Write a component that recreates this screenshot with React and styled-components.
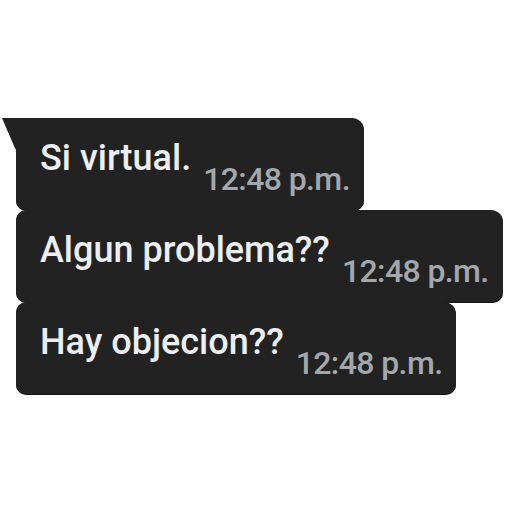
import React from "react";
import styled, { createGlobalStyle } from "styled-components";

const GlobalStyle = createGlobalStyle`
  body {
    margin: 0;
    background: #ffffff;
    font-family: Roboto, "Liberation Sans", sans-serif;
  }
`;

const Page = styled.div`
  width: 512px;
  height: 512px;
  box-sizing: border-box;
  padding: 118px 0 0 16px;
  display: flex;
  flex-direction: column;
  align-items: flex-start;
`;

const Bubble = styled.div`
  position: relative;
  display: flex;
  align-items: flex-start;
  box-sizing: border-box;
  height: 92px;
  padding: 19px 14px 13px 24px;
  background: #222222;
  border-radius: ${({ first }) => (first ? "0 12px 10px 10px" : "10px 12px 10px 10px")};
  box-shadow: 0 1px 0 #141414;

  &::before {
    content: "";
    display: ${({ first }) => (first ? "block" : "none")};
    position: absolute;
    left: -14px;
    top: 0;
    width: 15px;
    height: 32px;
    background: #222222;
    clip-path: polygon(0 0, 100% 0, 100% 100%, 88% 96%);
  }
`;

const Message = styled.span`
  font-size: 36px;
  font-weight: 500;
  line-height: 42px;
  color: #eceef0;
  white-space: nowrap;
`;

const Time = styled.span`
  margin: 24px 0 0 12px;
  font-size: 32px;
  font-weight: 500;
  letter-spacing: -0.6px;
  line-height: 36px;
  color: #a3a8ad;
  white-space: nowrap;
`;

const messages = [
  { text: "Si virtual.", time: "12:48 p.m." },
  { text: "Algun problema??", time: "12:48 p.m." },
  { text: "Hay objecion??", time: "12:48 p.m." },
];

const App = () => {
  return (
    <>
      <GlobalStyle />
      <Page>
        {messages.map((m, i) => (
          <Bubble key={i} first={i === 0}>
            <Message>{m.text}</Message>
            <Time>{m.time}</Time>
          </Bubble>
        ))}
      </Page>
    </>
  );
};

export default App;
